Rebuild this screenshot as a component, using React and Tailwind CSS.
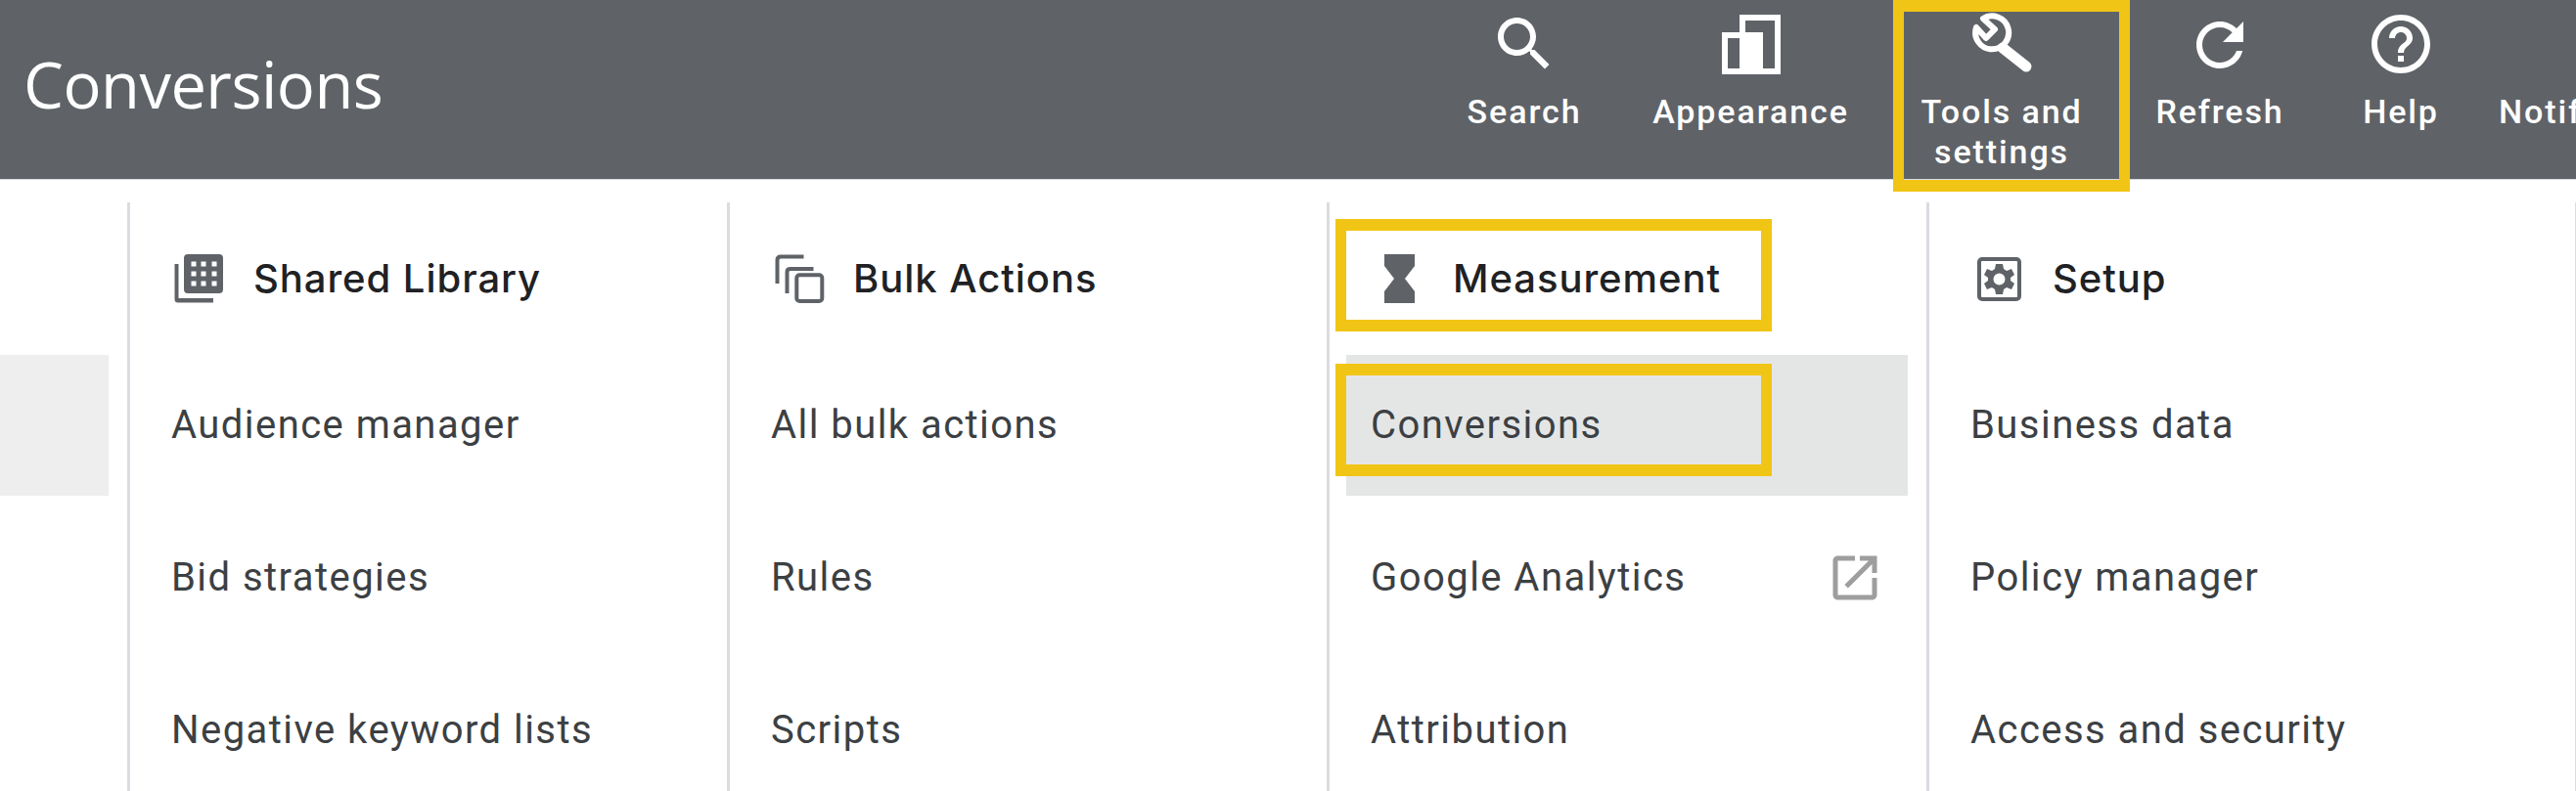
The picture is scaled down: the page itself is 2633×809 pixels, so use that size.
const roboto = "font-['Roboto',sans-serif]";
const yellowBox = "pointer-events-none absolute border-x-[11px] border-y-[12px] border-[#f1c515]";

function SearchIcon() {
  return (
    <svg viewBox="0 0 24 24" className="h-[72px] w-[72px] fill-white">
      <path d="M15.5 14h-.79l-.28-.27C15.41 12.59 16 11.11 16 9.5 16 5.91 13.09 3 9.5 3S3 5.91 3 9.5 5.91 16 9.5 16c1.61 0 3.09-.59 4.23-1.57l.27.28v.79l5 4.99L20.49 19l-4.99-5zm-6 0C7.01 14 5 11.99 5 9.5S7.01 5 9.5 5 14 7.01 14 9.5 11.99 14 9.5 14z" />
    </svg>
  );
}

function AppearanceIcon() {
  return (
    <svg viewBox="0 0 60 61" className="mt-[6px] h-[61px] w-[60px] fill-white">
      <path fillRule="evenodd" d="M0 18H18V0H60V61H0ZM6 24V55H18V24ZM24 6V18H42V55H54V6Z" />
    </svg>
  );
}

function WrenchIcon() {
  return (
    <svg viewBox="-4 4 100 72" className="h-[72px] w-[100px] fill-none stroke-white">
      <path d="M27 14L39 25L30 34L20 23A17 17 0 1 0 27 14Z" strokeWidth="6" strokeLinejoin="round" />
      <path d="M47 44L71 63" strokeWidth="11" strokeLinecap="round" />
    </svg>
  );
}

function RefreshIcon() {
  return (
    <svg viewBox="0 0 24 24" className="mt-px h-[72px] w-[72px] fill-white">
      <path d="M17.65 6.35C16.2 4.9 14.21 4 12 4c-4.42 0-7.99 3.58-7.99 8s3.57 8 7.99 8c3.73 0 6.84-2.55 7.73-6h-2.08c-.82 2.33-3.04 4-5.65 4-3.31 0-6-2.69-6-6s2.69-6 6-6c1.66 0 3.14.69 4.22 1.78L13 11h7V4l-2.35 2.35z" />
    </svg>
  );
}

function HelpIcon() {
  return (
    <svg viewBox="0 0 24 24" className="h-[72px] w-[72px] fill-white">
      <path d="M11 18h2v-2h-2v2zm1-16C6.48 2 2 6.48 2 12s4.48 10 10 10 10-4.48 10-10S17.52 2 12 2zm0 18c-4.41 0-8-3.59-8-8s3.59-8 8-8 8 3.59 8 8-3.59 8-8 8zm0-14c-2.21 0-4 1.79-4 4h2c0-1.1.9-2 2-2s2 .9 2 2c0 2-3 1.75-3 5h2c0-2.25 3-2.5 3-5 0-2.21-1.79-4-4-4z" />
    </svg>
  );
}

function NavItem({ icon, label, width }) {
  return (
    <div className={`relative flex shrink-0 flex-col items-center pt-[9px] ${width}`}>
      <div className="flex h-[72px] items-start justify-center">{icon}</div>
      <div className={`mt-[13px] text-center text-[34px] font-medium leading-[41px] tracking-[1.9px] text-white ${roboto}`}>{label}</div>
    </div>
  );
}

function LibraryIcon() {
  return (
    <svg viewBox="0 0 50 50" className="ml-[3px] h-[50px] w-[50px] fill-[#5f6368]">
      <path fillRule="evenodd" d="M14 0H46Q50 0 50 4V36Q50 40 46 40H14Q10 40 10 36V4Q10 0 14 0ZM17.5 7.5V12.5H22.5V7.5ZM27.5 7.5V12.5H32.5V7.5ZM38.5 7.5V12.5H43.5V7.5ZM17.5 17.5V22.5H22.5V17.5ZM27.5 17.5V22.5H32.5V17.5ZM38.5 17.5V22.5H43.5V17.5ZM17.5 27.5V32.5H22.5V27.5ZM27.5 27.5V32.5H32.5V27.5ZM38.5 27.5V32.5H43.5V27.5Z" />
      <path d="M0.5 10H4.5V45H40V49.5H4Q0.5 49.5 0.5 46Z" />
    </svg>
  );
}

function BulkIcon() {
  return (
    <svg viewBox="0 0 52 50" className="ml-[3px] h-[50px] w-[52px] fill-none stroke-[#5f6368] stroke-[4px]">
      <path d="M3.5 30V6Q3.5 2.5 7 2.5H30.5" />
      <path d="M13.5 40V18Q13.5 15 17 15H40.5" />
      <rect x="23.3" y="21.3" width="26" height="26.7" rx="3" />
    </svg>
  );
}

function HourglassIcon() {
  return (
    <svg viewBox="0 0 31 50" className="ml-[14px] h-[50px] w-[31px] fill-[#5f6368]">
      <path d="M0 0H31V12L21 25L31 38V50H0V38L10 25L0 12Z" />
    </svg>
  );
}

function SetupIcon() {
  return (
    <svg viewBox="0 0 45 45" className="ml-[7px] h-[45px] w-[45px]">
      <rect x="2" y="2" width="41" height="41" rx="3" className="fill-none stroke-[#5f6368] stroke-[4px]" />
      <path className="fill-[#5f6368]" fillRule="evenodd" d="M19 7H26L27 12L30 14L35 12L38 18L34 21V24L38 27L35 33L30 31L27 33L26 38H19L18 33L15 31L10 33L7 27L11 24V21L7 18L10 12L15 14L18 12ZM22.5 16.5A6 6 0 1 0 22.5 28.5A6 6 0 1 0 22.5 16.5Z" />
    </svg>
  );
}

function ExternalIcon() {
  return (
    <svg viewBox="0 0 24 24" className="h-[60px] w-[60px] fill-[#9e9e9e]">
      <path d="M19 19H5V5h7V3H5c-1.11 0-2 .9-2 2v14c0 1.1.89 2 2 2h14c1.1 0 2-.9 2-2v-7h-2v7zM14 3v2h3.59l-9.83 9.83 1.41 1.41L19 6.41V10h2V3h-7z" />
    </svg>
  );
}

function MenuRow({ label, active, trailing, boxed }) {
  return (
    <div className={`relative ml-[17px] mr-[19px] flex h-[144px] shrink-0 items-center justify-between pl-[25px] pr-[24px] ${active ? "bg-[#e4e6e6]" : ""}`}>
      <span className={`text-[40px] tracking-[1.45px] text-[#3c4043] ${roboto}`}>{label}</span>
      {trailing}
      {boxed ? <div className={`${yellowBox} -left-[11px] top-[9px] h-[115px] w-[446px]`} /> : null}
    </div>
  );
}

function MenuColumn({ icon, title, boxed, rows, width, last }) {
  return (
    <section className={`flex shrink-0 flex-col gap-[12px] border-l-[3px] border-[#dadce0] ${width} ${last ? "border-r-[1px]" : ""}`}>
      <div className="relative flex h-[144px] shrink-0 items-center pl-[42px] pt-[12px]">
        <div className="flex w-[84px] justify-start">{icon}</div>
        <h2 className="text-[40px] font-medium tracking-[0.95px] text-[#202124] font-['Inter',sans-serif]">{title}</h2>
        {boxed ? <div className={`${yellowBox} left-[6px] top-[17px] h-[115px] w-[446px]`} /> : null}
      </div>
      {rows}
    </section>
  );
}

export default function App() {
  return (
    <div className="h-[809px] w-[2633px] overflow-hidden bg-white">
      <header className="flex h-[184px] overflow-hidden border-b border-[#dadce0] bg-[#5f6368]">
        <div className="w-[1464px] shrink-0 pl-[24px] pt-[38px]">
          <h1 className="text-[65px] font-normal tracking-[-0.5px] text-white font-['Open_Sans',sans-serif]">Conversions</h1>
        </div>
        <nav className="flex">
          <NavItem width="w-[188px]" icon={<SearchIcon />} label="Search" />
          <NavItem width="w-[275px]" icon={<AppearanceIcon />} label="Appearance" />
          <NavItem width="w-[238px]" icon={<WrenchIcon />} label={<>Tools and<br />settings</>} />
          <NavItem width="w-[208px]" icon={<RefreshIcon />} label="Refresh" />
          <NavItem width="w-[162px]" icon={<HelpIcon />} label="Help" />
          <div className={`whitespace-nowrap pl-[19px] pt-[94px] text-[34px] font-medium leading-[41px] tracking-[1.9px] text-white ${roboto}`}>Notifications</div>
        </nav>
      </header>
      <div className="relative flex">
        <div className={`${yellowBox} -top-[184px] left-[1935px] h-[196px] w-[242px]`} />
        <div className="w-[130px] shrink-0 pt-[179px]">
          <div className="h-[144px] w-[111px] bg-[#eeeeee]" />
        </div>
        <div className="flex pt-[23px]">
          <MenuColumn
            width="w-[613px]"
            icon={<LibraryIcon />}
            title="Shared Library"
            rows={["Audience manager", "Bid strategies", "Negative keyword lists"].map((label) => <MenuRow key={label} label={label} />)}
          />
          <MenuColumn
            width="w-[613px]"
            icon={<BulkIcon />}
            title="Bulk Actions"
            rows={["All bulk actions", "Rules", "Scripts"].map((label) => <MenuRow key={label} label={label} />)}
          />
          <MenuColumn
            width="w-[613px]"
            icon={<HourglassIcon />}
            title="Measurement"
            boxed
            rows={
              <>
                <MenuRow label="Conversions" active boxed />
                <MenuRow label="Google Analytics" trailing={<ExternalIcon />} />
                <MenuRow label="Attribution" />
              </>
            }
          />
          <MenuColumn
            width="w-[664px]"
            last
            icon={<SetupIcon />}
            title="Setup"
            rows={["Business data", "Policy manager", "Access and security"].map((label) => <MenuRow key={label} label={label} />)}
          />
        </div>
      </div>
    </div>
  );
}
